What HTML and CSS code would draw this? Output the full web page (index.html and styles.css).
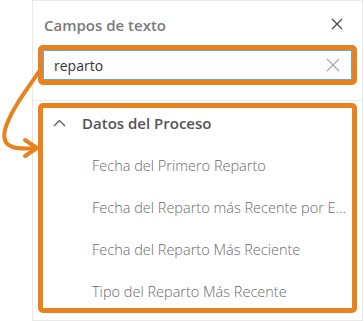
FILE: index.html
```html
<!DOCTYPE html>
<html lang="es">
<head>
<meta charset="utf-8">
<link rel="stylesheet" href="styles.css">
</head>
<body>
<div class="stage">
  <div class="panel">
    <div class="header">
      <span class="title">Campos de texto</span>
      <svg class="close" width="12" height="12" viewBox="0 0 12 12"><path d="M1 1 L11 11 M11 1 L1 11" stroke="#444" stroke-width="1.2" fill="none"/></svg>
    </div>
    <div class="hl search-hl">
      <div class="search">
        <span class="query">reparto</span>
        <svg class="clear" width="14" height="14" viewBox="0 0 14 14"><path d="M1 1 L13 13 M13 1 L1 13" stroke="#a6a6a6" stroke-width="1.1" fill="none"/></svg>
      </div>
    </div>
    <div class="section">
      <div class="hl list-hl">
        <div class="group">
          <svg class="chev" width="13" height="8" viewBox="0 0 13 8"><path d="M1 7 L6.5 1.5 L12 7" stroke="#555" stroke-width="1.2" fill="none"/></svg>
          <span class="group-name">Datos del Proceso</span>
        </div>
        <ul class="items">
          <li>Fecha del Primero Reparto</li>
          <li>Fecha del Reparto más Recente por E...</li>
          <li>Fecha del Reparto Más Reciente</li>
          <li>Tipo del Reparto Más Recente</li>
        </ul>
      </div>
    </div>
  </div>
  <svg class="arrow" width="364" height="321" viewBox="0 0 364 321">
    <path d="M40 70 C 30 86, 10 110, 5 130 C 1 147, 14 150, 35 148" stroke="#e8821c" stroke-width="4" fill="none" stroke-linecap="round"/>
    <path d="M25 140 L37 148 L25 156" stroke="#e8821c" stroke-width="4" fill="none" stroke-linecap="round" stroke-linejoin="round"/>
  </svg>
</div>
</body>
</html>
```
FILE: styles.css
```css
html, body {
  margin: 0;
  padding: 0;
  background: #ffffff;
}
body {
  font-family: "Open Sans", "Noto Sans", sans-serif;
}
.stage {
  position: relative;
  width: 364px;
  height: 321px;
  overflow: hidden;
}
.panel {
  margin-left: 32px;
  width: 329px;
  height: 319px;
  border: 1px solid #e9e9e9;
  display: flex;
  flex-direction: column;
}
.header {
  height: 44px;
  display: flex;
  align-items: center;
  justify-content: space-between;
  padding: 0 19px 0 11px;
  box-sizing: border-box;
}
.title {
  font-size: 15px;
  font-weight: 600;
  color: #7a7a7a;
  margin-top: 3px;
}
.close {
  margin-top: 2px;
}
.hl {
  margin: 0 5px;
  border: 5px solid #e8821c;
  border-radius: 5px;
}
.search-hl {
  height: 40px;
  box-sizing: border-box;
}
.search {
  height: 30px;
  border: 1px solid #6aa6e0;
  box-sizing: border-box;
  display: flex;
  align-items: center;
  justify-content: space-between;
  padding: 0 11px 0 10px;
}
.query {
  font-size: 14px;
  color: #333;
}
.section {
  margin-top: 15px;
  border-top: 1px solid #ececec;
  padding-top: 2px;
}
.list-hl {
  height: 210px;
  box-sizing: border-box;
}
.group {
  height: 30px;
  display: flex;
  align-items: center;
  padding-left: 10px;
}
.chev {
  margin-right: 16px;
}
.group-name {
  font-size: 15px;
  font-weight: 600;
  color: #555;
}
.items {
  list-style: none;
  margin: 0;
  padding: 6px 0 0 0;
}
.items li {
  height: 42px;
  display: flex;
  align-items: center;
  padding-left: 49px;
  font-size: 14.5px;
  font-weight: 300;
  color: #6a6a6a;
  white-space: nowrap;
}
.arrow {
  position: absolute;
  left: 0;
  top: 0;
  pointer-events: none;
}
```
